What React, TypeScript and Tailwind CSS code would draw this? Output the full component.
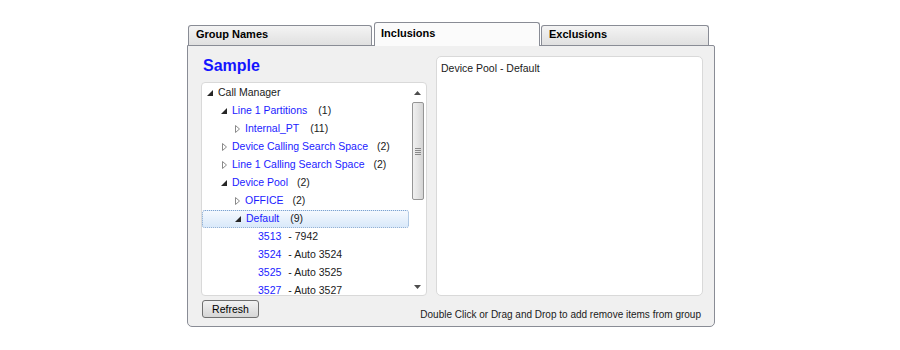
import React from "react"

type Node = {
    level: number
    name?: string
    count?: string
    gap?: string
    state?: "open" | "closed" | "leaf"
    num?: string
    desc?: string
    black?: boolean
    selected?: boolean
}

const rows: Node[] = [
    { level: 0, name: "Call Manager", state: "open", black: true },
    { level: 1, name: "Line 1 Partitions", count: "(1)", gap: "ml-[11px]", state: "open" },
    { level: 2, name: "Internal_PT", count: "(11)", gap: "ml-[11px]", state: "closed" },
    { level: 1, name: "Device Calling Search Space", count: "(2)", gap: "ml-[9px]", state: "closed" },
    { level: 1, name: "Line 1 Calling Search Space", count: "(2)", gap: "ml-[9px]", state: "closed" },
    { level: 1, name: "Device Pool", count: "(2)", gap: "ml-[9px]", state: "open" },
    { level: 2, name: "OFFICE", count: "(2)", gap: "ml-[9px]", state: "closed" },
    { level: 2, name: "Default", count: "(9)", gap: "ml-[11px]", state: "open", selected: true },
    { level: 3, num: "3513", desc: "- 7942", state: "leaf" },
    { level: 3, num: "3524", desc: "- Auto 3524", state: "leaf" },
    { level: 3, num: "3525", desc: "- Auto 3525", state: "leaf" },
    { level: 3, num: "3527", desc: "- Auto 3527", state: "leaf" },
]

const indent = ["pl-[3px]", "pl-[17px]", "pl-[30px]", "pl-[43px]"]

function Expander({ state }: { state?: string }) {
    if (state === "open") {
        return (
            <svg width="13" height="10" viewBox="0 0 13 10">
                <polygon points="8,2 8,8 2,8" fill="#262626" />
            </svg>
        )
    }
    if (state === "closed") {
        return (
            <svg width="13" height="10" viewBox="0 0 13 10">
                <polygon points="3.5,1.5 7.5,5 3.5,8.5" fill="#fff" stroke="#8a8a8a" strokeWidth="1" />
            </svg>
        )
    }
    return <span className="w-[13px]" />
}

function TreeRow({ node }: { node: Node }) {
    return (
        <div
            className={`flex items-center h-[18px] ${indent[node.level]} ${node.selected ? "border border-dotted border-[#7da2ce] rounded-[3px] bg-gradient-to-b from-[#f5f9fe] to-[#d9e9fa]" : ""}`}
        >
            <span className="flex w-[13px] justify-center shrink-0">
                <Expander state={node.state} />
            </span>
            {node.state === "leaf" ? (
                <>
                    <span className="text-[#1b1bff]">{node.num}</span>
                    <span className="ml-[7px] text-[#1a1a1a]">{node.desc}</span>
                </>
            ) : (
                <>
                    <span className={node.black ? "text-[#1a1a1a]" : "text-[#1b1bff]"}>{node.name}</span>
                    {node.count && <span className={`${node.gap} text-[#1a1a1a]`}>{node.count}</span>}
                </>
            )}
        </div>
    )
}

function ScrollBar() {
    return (
        <div className="flex flex-col items-center w-[17px] shrink-0 py-[2px]">
            <svg width="9" height="12" viewBox="0 0 9 12" className="mt-[4px]">
                <polygon points="4.5,2 8,6 1,6" fill="#4d4d4d" />
            </svg>
            <div className="mt-[1px] w-[12px] h-[98px] rounded-[2px] border border-[#959595] bg-gradient-to-r from-[#f0f0f0] via-[#e4e4e4] to-[#d4d4d4] flex items-center justify-center">
                <div className="flex flex-col gap-[1px]">
                    <div className="w-[6px] h-[1px] bg-[#8a8a8a]" />
                    <div className="w-[6px] h-[1px] bg-[#8a8a8a]" />
                    <div className="w-[6px] h-[1px] bg-[#8a8a8a]" />
                    <div className="w-[6px] h-[1px] bg-[#8a8a8a]" />
                </div>
            </div>
            <div className="flex-1" />
            <svg width="9" height="12" viewBox="0 0 9 12" className="mb-[1px]">
                <polygon points="1,5 8,5 4.5,9" fill="#4d4d4d" />
            </svg>
        </div>
    )
}

export default function App() {
    return (
        <div className="w-[900px] h-[350px] bg-white" style={{ fontFamily: '"Liberation Sans", Arial, sans-serif' }}>
            <div className="ml-[187px] pt-[22px] w-[528px] text-[10.5px] text-[#1a1a1a]">
                {/* Tabs */}
                <div className="flex items-end h-[23px] relative z-10 text-[11px]">
                    <div className="ml-[1px] w-[184px] h-[20px] border border-b-0 border-[#898c95] rounded-t-[3px] bg-gradient-to-b from-[#f4f4f4] to-[#e0e0e0] pl-[7px] leading-[17px] font-bold text-black">
                        Group Names
                    </div>
                    <div className="ml-[2px] w-[166px] h-[24px] -mb-[1px] border border-b-0 border-[#898c95] rounded-t-[3px] bg-[#fbfbfb] pl-[6px] pt-[2px] leading-[17px] font-bold text-black">
                        Inclusions
                    </div>
                    <div className="ml-[1px] w-[168px] h-[20px] border border-b-0 border-[#898c95] rounded-t-[3px] bg-gradient-to-b from-[#f4f4f4] to-[#e0e0e0] pl-[7px] leading-[17px] font-bold text-black">
                        Exclusions
                    </div>
                </div>

                {/* Panel */}
                <div className="h-[282px] border border-[#898c95] rounded-b-[5px] rounded-tr-[2px] bg-[#f0f0f0] pt-[10px] pl-[13px] pr-[11px]">
                    <div className="flex gap-[9px] h-[240px]">
                        <div className="flex flex-col w-[226px]">
                            <div className="h-[26px] pl-[2px] text-[16px] font-bold text-[#1414ff] leading-[20px]">Sample</div>
                            <div className="flex h-[214px] bg-white border border-[#d9d9d9] rounded-[4px] overflow-hidden">
                                <div className="flex-1 pt-[1px]">
                                    {rows.map((r, i) => (
                                        <TreeRow key={i} node={r} />
                                    ))}
                                </div>
                                <ScrollBar />
                            </div>
                        </div>
                        <div className="flex-1 bg-white border border-[#d9d9d9] rounded-[5px] pl-[4px] pt-[4px]">
                            Device Pool - Default
                        </div>
                    </div>

                    <div className="flex items-start justify-between mt-[4px] pl-[1px] pr-[2px]">
                        <button className="w-[57px] h-[18px] border border-[#707070] rounded-[3px] bg-gradient-to-b from-[#f2f2f2] to-[#d6d6d6] text-[10.5px] leading-[14px] text-black">
                            Refresh
                        </button>
                        <span className="mt-[8px] text-[10px] leading-[14px]">Double Click or Drag and Drop to add remove items from group</span>
                    </div>
                </div>
            </div>
        </div>
    )
}
